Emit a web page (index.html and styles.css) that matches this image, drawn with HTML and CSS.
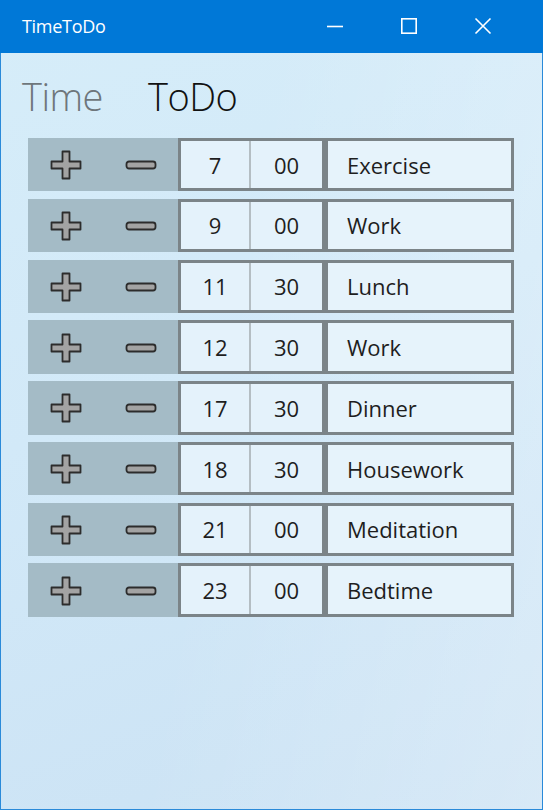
FILE: index.html
```html
<!DOCTYPE html>
<html>
<head>
<meta charset="utf-8">
<link rel="stylesheet" href="styles.css">
</head>
<body>
<div class="window">
  <div class="titlebar">
    <span class="app-title">TimeToDo</span>
    <div class="caption">
      <span class="cap-btn"><svg width="18" height="18" viewBox="0 0 18 18"><path d="M1 9.5H17" stroke="#fff" stroke-width="1.6"/></svg></span>
      <span class="cap-btn"><svg width="18" height="18" viewBox="0 0 18 18"><rect x="1.8" y="1.8" width="14.4" height="14.4" fill="none" stroke="#fff" stroke-width="1.6"/></svg></span>
      <span class="cap-btn"><svg width="18" height="18" viewBox="0 0 18 18"><path d="M1.5 1.5L16.5 16.5M16.5 1.5L1.5 16.5" stroke="#fff" stroke-width="1.6"/></svg></span>
    </div>
  </div>
  <div class="content">
    <div class="header">
      <span class="h-time">Time</span>
      <span class="h-todo">ToDo</span>
    </div>
    <div class="rows" id="rows"></div>
  </div>
</div>
<template id="row-tpl">
  <div class="row">
    <div class="controls">
      <span class="ctl"><svg width="32" height="30" viewBox="0 0 32 30"><path d="M12.5 1.5H19.5V11.5H30.5V18.5H19.5V28.5H12.5V18.5H1.5V11.5H12.5Z" fill="#a3a3a3" stroke="#2c2c2c" stroke-width="1.8" stroke-linejoin="round"/></svg></span>
      <span class="ctl"><svg width="32" height="10" viewBox="0 0 32 10"><rect x="1.5" y="1.5" width="29" height="7" rx="2.5" fill="#a3a3a3" stroke="#2c2c2c" stroke-width="1.8"/></svg></span>
    </div>
    <div class="timebox">
      <span class="hour"></span>
      <span class="minute"></span>
    </div>
    <div class="label"></div>
  </div>
</template>
<script src="app.js"></script>
</body>
</html>
```

FILE: app.js
```js
const data = [
  ["7", "00", "Exercise"],
  ["9", "00", "Work"],
  ["11", "30", "Lunch"],
  ["12", "30", "Work"],
  ["17", "30", "Dinner"],
  ["18", "30", "Housework"],
  ["21", "00", "Meditation"],
  ["23", "00", "Bedtime"]
];
const rows = document.getElementById("rows");
const tpl = document.getElementById("row-tpl");
data.forEach(([h, m, t]) => {
  const node = tpl.content.cloneNode(true);
  node.querySelector(".hour").textContent = h;
  node.querySelector(".minute").textContent = m;
  node.querySelector(".label").textContent = t;
  rows.appendChild(node);
});
```

FILE: styles.css
```css
* { box-sizing: border-box; }
html, body { margin: 0; padding: 0; }
body {
  width: 543px;
  height: 810px;
  font-family: "Open Sans", "Noto Sans", sans-serif;
  overflow: hidden;
}
.window {
  width: 543px;
  height: 810px;
  border: 1px solid #2a8ad9;
  border-top: none;
  display: flex;
  flex-direction: column;
  background: linear-gradient(160deg, #d6edf9 0%, #d2e9f8 45%, #cbe2f4 100%);
}
.titlebar {
  height: 53px;
  background: #0078d7;
  display: flex;
  align-items: center;
  margin: 0 -1px;
  padding-left: 22px;
  color: #fff;
  flex-shrink: 0;
}
.app-title {
  font-size: 18px;
  letter-spacing: -0.3px;
  margin-top: -2px;
}
.caption {
  margin-left: auto;
  display: flex;
  margin-right: 51px;
  gap: 56px;
  margin-top: -1px;
}
.cap-btn { display: flex; }
.content {
  flex: 1;
  padding-left: 27px;
  background: linear-gradient(100deg, rgba(255,255,255,0) 40%, rgba(255,255,255,0.25) 100%);
}
.header {
  height: 85px;
  display: flex;
  align-items: flex-start;
  padding-top: 17px;
  margin-left: -6px;
  font-size: 38px;
  font-weight: 300;
  letter-spacing: -0.5px;
}
.h-time { color: #6e767b; }
.h-todo { color: #111; margin-left: 45px; }
.rows {
  display: flex;
  flex-direction: column;
  gap: 7.4px;
}
.row {
  display: flex;
  height: 53.4px;
  width: 486px;
}
.controls {
  width: 150px;
  background: #a4bbc6;
  display: flex;
}
.ctl {
  flex: 1;
  display: flex;
  align-items: center;
  justify-content: center;
  padding-top: 1px;
}
.timebox {
  width: 147px;
  display: flex;
  border: 3px solid #7b8488;
  background: #e4f2fb;
  font-size: 22px;
  color: #1e1e1e;
}
.hour, .minute {
  display: flex;
  align-items: center;
  justify-content: center;
}
.hour { width: 70px; border-right: 2px solid #b4bec3; }
.minute { flex: 1; }
.label {
  flex: 1;
  border: 3px solid #7b8488;
  background: #e6f3fb;
  display: flex;
  align-items: center;
  padding-left: 19px;
  font-size: 22px;
  color: #1e1e1e;
}
```
